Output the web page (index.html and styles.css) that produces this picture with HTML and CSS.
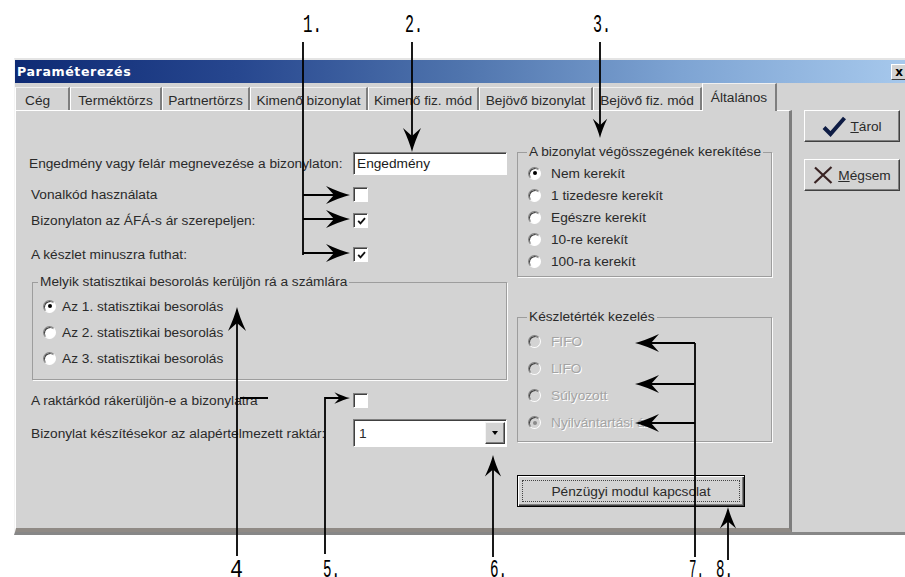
FILE: index.html
```html
<!DOCTYPE html>
<html lang="hu">
<head>
<meta charset="utf-8">
<title>Paraméterezés</title>
<link rel="stylesheet" href="styles.css">
</head>
<body>
<div class="page">
  <div class="window">
    <div class="titlebar">
      <span class="title">Paraméterezés</span>
      <span class="close">x</span>
    </div>
    <div class="main">
      <div class="tabctl">
        <div class="tabs">
          <div class="tab">Cég</div>
          <div class="tab">Terméktörzs</div>
          <div class="tab">Partnertörzs</div>
          <div class="tab">Kimenő bizonylat</div>
          <div class="tab">Kimenő fiz. mód</div>
          <div class="tab">Bejövő bizonylat</div>
          <div class="tab">Bejövő fiz. mód</div>
          <div class="tab active">Általános</div>
        </div>
        <div class="panel">
          <div class="col-left">
            <div class="row row-name">
              <span class="label label-first">Engedmény vagy felár megnevezése a bizonylaton:</span>
              <span class="textbox">Engedmény</span>
            </div>
            <div class="row row-bar">
              <span class="label">Vonalkód használata</span>
              <span class="cb"></span>
            </div>
            <div class="row row-vat">
              <span class="label">Bizonylaton az ÁFÁ-s ár szerepeljen:</span>
              <span class="cb"><svg viewBox="0 0 9 8"><path d="M1.2,3.8 L3.5,6.3 L8,1.2"/></svg></span>
            </div>
            <div class="row row-minus">
              <span class="label">A készlet minuszra futhat:</span>
              <span class="cb"><svg viewBox="0 0 9 8"><path d="M1.2,3.8 L3.5,6.3 L8,1.2"/></svg></span>
            </div>
            <fieldset class="group g-stat">
              <legend>Melyik statisztikai besorolás kerüljön rá a számlára</legend>
              <div class="opt"><span class="radio on"></span>Az 1. statisztikai besorolás</div>
              <div class="opt"><span class="radio"></span>Az 2. statisztikai besorolás</div>
              <div class="opt"><span class="radio"></span>Az 3. statisztikai besorolás</div>
            </fieldset>
            <div class="row row-store">
              <span class="label">A raktárkód rákerüljön-e a bizonylatra</span>
              <span class="cb"></span>
            </div>
            <div class="row row-default">
              <span class="label">Bizonylat készítésekor az alapértelmezett raktár:</span>
              <span class="combo"><span class="combo-val">1</span><span class="dd"></span></span>
            </div>
          </div>
          <div class="col-right">
            <fieldset class="group g-round">
              <legend>A bizonylat végösszegének kerekítése</legend>
              <div class="opt"><span class="radio on"></span>Nem kerekít</div>
              <div class="opt"><span class="radio"></span>1 tizedesre kerekít</div>
              <div class="opt"><span class="radio"></span>Egészre kerekít</div>
              <div class="opt"><span class="radio"></span>10-re kerekít</div>
              <div class="opt"><span class="radio"></span>100-ra kerekít</div>
            </fieldset>
            <fieldset class="group g-stock">
              <legend>Készletérték kezelés</legend>
              <div class="opt"><span class="radio"></span>FIFO</div>
              <div class="opt"><span class="radio"></span>LIFO</div>
              <div class="opt"><span class="radio"></span>Súlyozott</div>
              <div class="opt"><span class="radio on"></span>Nyilvántartási ár</div>
            </fieldset>
            <button class="btn-link"><span class="focus">Pénzügyi modul kapcsolat</span></button>
          </div>
        </div>
      </div>
      <div class="side">
        <button class="btn btn-ok">
          <svg class="ico-check" viewBox="0 0 24 21"><path d="M2,11.5 L8.5,18 L22.5,2"/></svg>
          <span><u>T</u>árol</span>
        </button>
        <button class="btn btn-cancel">
          <svg class="ico-x" viewBox="0 0 20 18"><path d="M2,1.5 Q10,9 18.5,17 M18.5,1 Q10,9 1.5,17"/></svg>
          <span><u>M</u>égsem</span>
        </button>
      </div>
    </div>
  </div>

  <svg class="notes" width="905" height="577" viewBox="0 0 905 577">
    <defs>
      <path id="ah" d="M0,0 Q-10,-2.5 -24,-9 L-16,0 L-24,9 Q-10,2.5 0,0 Z"/>
    </defs>
    <g class="lines">
      <path d="M303,42 V255 M303,195 H334 M303,219 H334 M303,253 H334"/>
      <path d="M412,42 V138"/>
      <path d="M600,42 V126"/>
      <path d="M237,556 V322"/>
      <path d="M325,554 V398 H340 M240,398 H268"/>
      <path d="M493,557 V468"/>
      <path d="M695,557 V343 M695,343 H650 M695,384 H650 M695,423 H650"/>
      <path d="M728,560 V520"/>
    </g>
    <g class="heads">
      <use href="#ah" transform="translate(350,195)"/>
      <use href="#ah" transform="translate(350,219)"/>
      <use href="#ah" transform="translate(350,253)"/>
      <use href="#ah" transform="translate(412,152) rotate(90)"/>
      <use href="#ah" transform="translate(600,138) rotate(90) scale(0.8)"/>
      <use href="#ah" transform="translate(237,307) rotate(-90)"/>
      <use href="#ah" transform="translate(350,398) scale(0.65)"/>
      <use href="#ah" transform="translate(493,455) rotate(-90) scale(0.9)"/>
      <use href="#ah" transform="translate(635,343) rotate(180)"/>
      <use href="#ah" transform="translate(635,384) rotate(180)"/>
      <use href="#ah" transform="translate(635,423) rotate(180)"/>
      <use href="#ah" transform="translate(728,507) rotate(-90) scale(0.9)"/>
    </g>
    <g class="nums">
      <text x="303" y="32" textLength="19" lengthAdjust="spacingAndGlyphs">1.</text>
      <text x="405" y="32" textLength="18" lengthAdjust="spacingAndGlyphs">2.</text>
      <text x="593" y="32" textLength="18" lengthAdjust="spacingAndGlyphs">3.</text>
      <text x="230" y="577" textLength="13" lengthAdjust="spacingAndGlyphs">4</text>
      <text x="323" y="577" textLength="17" lengthAdjust="spacingAndGlyphs">5.</text>
      <text x="490" y="577" textLength="17" lengthAdjust="spacingAndGlyphs">6.</text>
      <text x="689" y="577" textLength="15" lengthAdjust="spacingAndGlyphs">7.</text>
      <text x="716" y="577" textLength="17" lengthAdjust="spacingAndGlyphs">8.</text>
    </g>
  </svg>
</div>
</body>
</html>
```

FILE: styles.css
```css
html, body {
  margin: 0;
  background: #fff;
}

body {
  font-family: "Liberation Sans", Arial, sans-serif;
  font-size: 13.7px;
  color: #2a2a2a;
}

.page {
  position: relative;
  width: 905px;
  height: 577px;
  overflow: hidden;
  box-sizing: border-box;
  padding: 58px 0 0 14px;
}

/* ---------- window ---------- */
.window {
  width: 891px;
  height: 477px;
  box-sizing: border-box;
  background: #d3d3d3;
  border-top: 2px solid #e4e4e4;
  border-left: 1px solid #f4f4f4;
  border-bottom: 3px solid #878787;
  display: flex;
  flex-direction: column;
  overflow: hidden;
}

.titlebar {
  height: 23px;
  flex: none;
  display: flex;
  align-items: center;
  justify-content: space-between;
  padding-left: 2px;
  background: linear-gradient(90deg, #0e2a74 0%, #27478f 25%, #4f74ad 50%, #7ea4d3 75%, #a6c8ec 100%);
}

.title {
  font-family: "DejaVu Sans", sans-serif;
  font-weight: bold;
  font-size: 12.6px;
  letter-spacing: 0.6px;
  color: #fff;
}

.close {
  width: 16px;
  height: 16px;
  box-sizing: border-box;
  margin-right: -2px;
  background: #d3d3d3;
  border: 1px solid;
  border-color: #fff #404040 #404040 #fff;
  display: flex;
  align-items: center;
  justify-content: center;
  font-family: "DejaVu Sans", sans-serif;
  font-weight: bold;
  font-size: 12px;
  line-height: 1;
  color: #000;
}

.main {
  flex: 1;
  display: flex;
  min-height: 0;
}

/* ---------- tabs ---------- */
.tabctl {
  width: 777px;
  flex: none;
  display: flex;
  flex-direction: column;
}

.tabs {
  height: 27px;
  flex: none;
  display: flex;
  align-items: flex-end;
}

.tab {
  height: 23px;
  box-sizing: border-box;
  padding-top: 3px;
  border-top: 1px solid #f0f0f0;
  border-left: 1px solid #fff;
  border-right: 2px solid #7e7e7e;
  display: flex;
  align-items: center;
  justify-content: center;
  white-space: nowrap;
}

.tab:nth-child(1) { width: 55px; justify-content: flex-start; padding-left: 9px; }
.tab:nth-child(2) { width: 92px; }
.tab:nth-child(3) { width: 88px; }
.tab:nth-child(4) { width: 118px; }
.tab:nth-child(5) { width: 111px; }
.tab:nth-child(6) { width: 114px; }
.tab:nth-child(7) { width: 109px; }

.tab.active {
  width: 75px;
  height: 28px;
  padding-top: 0;
  margin-bottom: -1px;
  position: relative;
  z-index: 1;
  background: #d3d3d3;
}

.panel {
  flex: 1;
  box-sizing: border-box;
  border-top: 1px solid #fff;
  border-left: 1px solid #fff;
  border-right: 3px solid #7d7d7d;
  border-bottom: 4px solid #8f8a85;
  padding: 41px 0 0 15px;
  display: flex;
  align-items: flex-start;
  gap: 10px;
}

/* ---------- left column ---------- */
.col-left {
  width: 476px;
  flex: none;
  display: flex;
  flex-direction: column;
}

.row {
  display: flex;
  align-items: center;
}

.label {
  width: 322px;
  flex: none;
  white-space: nowrap;
}

.label-first { margin-left: -2px; width: 324px; }

.row-name { height: 23px; }
.row-bar { margin-top: 12px; }
.row-vat { margin-top: 11px; }
.row-minus { margin-top: 19px; }
.row-store { margin-top: 13px; }
.row-default { margin-top: 11px; }

.cb {
  width: 15px;
  height: 15px;
  box-sizing: border-box;
  background: #fff;
  border: 1px solid;
  border-color: #808080 #fff #fff #808080;
  box-shadow: inset 1px 1px 0 #404040;
  display: flex;
  align-items: center;
  justify-content: center;
}

.cb svg {
  width: 9px;
  height: 8px;
  margin: 1px 0 0 1px;
}

.cb path {
  fill: none;
  stroke: #111;
  stroke-width: 1.8;
}

.textbox {
  width: 154px;
  height: 23px;
  box-sizing: border-box;
  background: #fff;
  border: 1px solid;
  border-color: #808080 #fff #fff #808080;
  box-shadow: inset 1px 1px 0 #404040;
  padding: 0 3px;
  display: flex;
  align-items: center;
  color: #1a1a1a;
}

.combo {
  width: 155px;
  height: 28px;
  box-sizing: border-box;
  background: #fff;
  border: 1px solid;
  border-color: #808080 #fff #fff #808080;
  box-shadow: inset 1px 1px 0 #404040;
  padding: 2px 1px 2px 5px;
  display: flex;
  align-items: center;
  justify-content: space-between;
}

.dd {
  width: 20px;
  height: 100%;
  box-sizing: border-box;
  background: #d3d3d3;
  border: 1px solid;
  border-color: #f4f4f4 #404040 #404040 #f4f4f4;
  box-shadow: inset -1px -1px 0 #808080;
  display: flex;
  align-items: center;
  justify-content: center;
}

.dd::before {
  content: "";
  border-left: 3.5px solid transparent;
  border-right: 3.5px solid transparent;
  border-top: 4px solid #000;
}

/* ---------- group boxes ---------- */
.group {
  margin: 0;
  min-width: 0;
  border: 1px solid #9d9d9d;
  box-shadow: 1px 1px 0 #fbfbfb;
  padding: 3px 0 4px 10px;
}

.group legend {
  padding: 0 2px;
  margin-left: -1px;
  line-height: 14px;
  white-space: nowrap;
}

.opt {
  display: flex;
  align-items: center;
  gap: 10px;
  white-space: nowrap;
}

.g-stat {
  margin-top: 13px;
  margin-left: 1px;
  padding: 4px 0 8px 10px;
}

.g-stat legend { margin-left: -5px; }
.g-stat .opt { height: 26px; gap: 6px; }

.col-right {
  width: 255px;
  flex: none;
  display: flex;
  flex-direction: column;
}

.g-round { margin-top: -7px; }
.g-round .opt { height: 22px; }

.g-stock {
  margin-top: 33px;
  padding: 4px 0 5px 10px;
}

.g-stock .opt {
  height: 27px;
  color: #a4a4a4;
  text-shadow: 1px 1px 0 #fff;
}

.radio {
  width: 13px;
  height: 13px;
  flex: none;
  box-sizing: border-box;
  border-radius: 50%;
  background: #fff;
  border: 1px solid;
  border-color: #808080 #fff #fff #808080;
  box-shadow: inset 1px 1px 0 #404040;
  display: flex;
  align-items: center;
  justify-content: center;
}

.radio.on::after {
  content: "";
  width: 4px;
  height: 4px;
  border-radius: 50%;
  background: #000;
}

.g-stock .radio { background: #d3d3d3; }
.g-stock .radio.on::after { background: #8a8a8a; }

.btn-link {
  margin-top: 33px;
  width: 228px;
  height: 32px;
  box-sizing: border-box;
  background: #d3d3d3;
  border: 1px solid #000;
  box-shadow: inset 1px 1px 0 #fff, inset -1px -1px 0 #404040, inset -2px -2px 0 #808080;
  padding: 4px;
  display: flex;
  font: inherit;
  color: #2a2a2a;
}

.focus {
  flex: 1;
  border: 1px dotted #444;
  display: flex;
  align-items: center;
  justify-content: center;
}

/* ---------- side buttons ---------- */
.side {
  flex: 1;
  padding: 27px 0 0 12px;
  display: flex;
  flex-direction: column;
  gap: 17px;
}

.btn {
  width: 96px;
  height: 32px;
  box-sizing: border-box;
  background: #d3d3d3;
  border: 1px solid;
  border-color: #fff #404040 #404040 #fff;
  box-shadow: inset -1px -1px 0 #808080;
  padding: 0;
  display: flex;
  align-items: center;
  justify-content: center;
  gap: 4px;
  font: inherit;
  color: #2a2a2a;
}

.btn-cancel { gap: 5px; }

.ico-check {
  width: 24px;
  height: 21px;
}

.ico-check path {
  fill: none;
  stroke: #0e1c44;
  stroke-width: 4;
  stroke-linejoin: miter;
}

.ico-x {
  width: 20px;
  height: 18px;
}

.ico-x path {
  fill: none;
  stroke: #3a2424;
  stroke-width: 2.2;
}

/* ---------- annotation overlay ---------- */
.notes {
  position: absolute;
  top: 0;
  left: 0;
  pointer-events: none;
}

.notes .lines path {
  fill: none;
  stroke: #000;
  stroke-width: 1.8;
}

.notes .heads {
  fill: #000;
}

.notes .nums text {
  font-family: "Liberation Mono", "Courier New", monospace;
  font-size: 26px;
  fill: #000;
}
```
